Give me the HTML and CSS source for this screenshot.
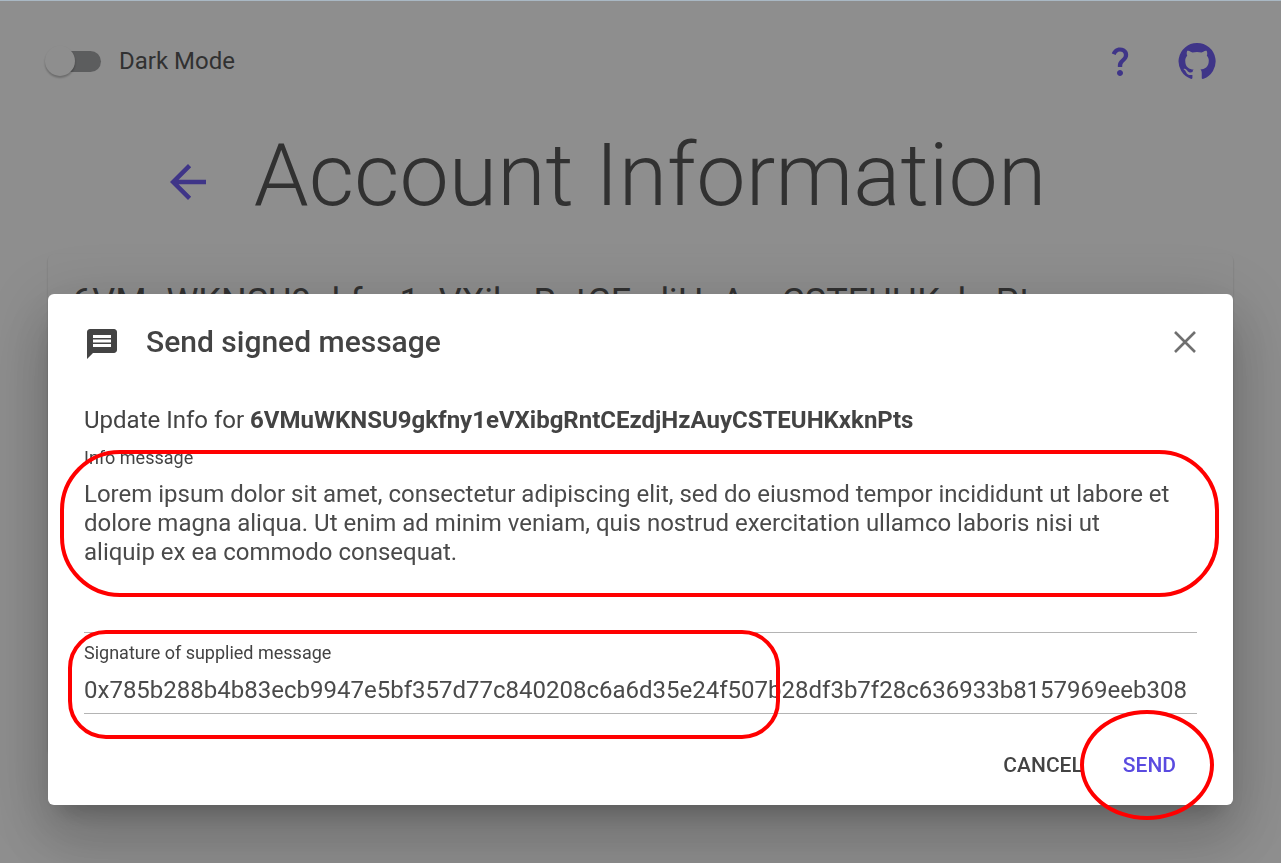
FILE: index.html
```html
<!DOCTYPE html>
<html lang="en">
<head>
<meta charset="utf-8">
<meta name="viewport" content="width=device-width, initial-scale=1">
<title>Account Information</title>
<link rel="stylesheet" href="styles.css">
</head>
<body class="page">
<header class="topbar">
  <label class="mode"><input class="switch" type="checkbox" role="switch"><span>Dark Mode</span></label>
  <nav class="links">
    <a class="icon-link" href="#help" aria-label="Help"><svg class="icon" viewBox="0 0 24 24"><path d="M11.07 12.85c.77-1.39 2.25-2.21 3.11-3.44.91-1.29.4-3.7-2.18-3.7-1.69 0-2.52 1.28-2.87 2.34L6.54 6.96C7.25 4.83 9.18 3 11.99 3c2.35 0 3.96 1.07 4.78 2.41.7 1.15 1.11 3.3.03 4.9-1.2 1.77-2.35 2.31-2.97 3.45-.25.46-.35.76-.35 2.24h-2.89c-.01-.78-.13-2.05.48-3.15M14 20c0 1.1-.9 2-2 2s-2-.9-2-2 .9-2 2-2 2 .9 2 2"/></svg></a>
    <a class="icon-link" href="#github" aria-label="GitHub"><svg class="icon icon-github" viewBox="0 0 24 24"><path d="M12 1.27a11 11 0 00-3.48 21.46c.55.09.73-.28.73-.55v-1.84c-3.03.64-3.67-1.46-3.67-1.46-.55-1.29-1.28-1.65-1.28-1.65-.92-.65.1-.65.1-.65 1.1 0 1.73 1.1 1.73 1.1.92 1.65 2.57 1.2 3.21.92a2 2 0 01.64-1.47c-2.47-.27-5.04-1.19-5.04-5.5 0-1.1.46-2.1 1.2-2.84a3.76 3.76 0 010-2.93s.91-.28 3.11 1.1c1.8-.49 3.7-.49 5.5 0 2.1-1.38 3.02-1.1 3.02-1.1a3.76 3.76 0 01.1 2.93c.83.74 1.2 1.74 1.2 2.94 0 4.21-2.57 5.13-5.04 5.4.45.37.82.92.82 2.02v3.03c0 .27.1.64.73.55A11 11 0 0012 1.27"/></svg></a>
  </nav>
</header>
<main class="account">
  <div class="heading">
    <a class="icon-link" href="#back" aria-label="Back"><svg class="icon icon-back" viewBox="0 0 24 24"><path d="M20 11H7.83l5.59-5.59L12 4l-8 8 8 8 1.41-1.41L7.83 13H20v-2z"/></svg></a>
    <h1 class="title">Account Information</h1>
  </div>
  <section class="card">
    <h2 class="address">6VMuWKNSU9gkfny1eVXibgRntCEzdjHzAuyCSTEUHKxknPts</h2>
  </section>
</main>
<div class="backdrop">
  <form class="dialog" role="dialog" aria-labelledby="dialog-title">
    <div class="dialog-head">
      <svg class="icon icon-message" viewBox="0 0 24 24"><path d="M20 2H4c-1.100 0-1.990.9-1.990 2L2 22l4-4h14c1.100 0 2-.9 2-2V4c0-1.100-.9-2-2-2zm-2 12H6v-2h12v2zm0-3H6V9h12v2zm0-3H6V6h12v2z"/></svg>
      <h2 class="dialog-title" id="dialog-title">Send signed message</h2>
      <button class="close" type="button" aria-label="Close"><svg class="icon" viewBox="0 0 36 36"><path class="stroke" d="M8 8l20 20M28 8L8 28"/></svg></button>
    </div>
    <p class="intro">Update Info for <b>6VMuWKNSU9gkfny1eVXibgRntCEzdjHzAuyCSTEUHKxknPts</b></p>
    <div class="field">
      <label class="label" for="info">Info message</label>
      <textarea class="control control-message" id="info" spellcheck="false">Lorem ipsum dolor sit amet, consectetur adipiscing elit, sed do eiusmod tempor incididunt ut labore et
dolore magna aliqua. Ut enim ad minim veniam, quis nostrud exercitation ullamco laboris nisi ut
aliquip ex ea commodo consequat.</textarea>
      <span class="mark mark-message"></span>
    </div>
    <div class="field field-signature">
      <label class="label" for="signature">Signature of supplied message</label>
      <input class="control" id="signature" type="text" spellcheck="false" value="0x785b288b4b83ecb9947e5bf357d77c840208c6a6d35e24f507b28df3b7f28c636933b8157969eeb308">
      <span class="mark mark-signature"></span>
    </div>
    <div class="actions">
      <button class="button" type="button">CANCEL</button>
      <button class="button button-primary" type="submit">SEND<span class="mark mark-send"></span></button>
    </div>
  </form>
</div>
</body>
</html>
```
FILE: styles.css
```css
* { box-sizing: border-box; }

.page {
  margin: 0;
  min-height: 100vh;
  border-top: 1px solid #a9b8c4;
  background: #fafafa;
  color: #575757;
  font: 24px/36px Roboto, "Liberation Sans", sans-serif;
}

.icon { display: block; width: 36px; height: 36px; fill: currentColor; }
.icon-github { width: 40px; height: 40px; }
.icon-back { width: 54px; height: 54px; }
.stroke { fill: none; stroke: currentColor; stroke-width: 2.600; }
.icon-link { color: #705df0; }

.topbar {
  display: flex;
  align-items: center;
  justify-content: space-between;
  height: 120px;
  padding: 0 64px 0 45px;
}
.mode { display: flex; align-items: center; gap: 18px; }
.switch {
  appearance: none;
  position: relative;
  width: 56px;
  height: 30px;
  margin: 0;
}
.switch::before {
  content: "";
  position: absolute;
  inset: 5px 0 4px 5px;
  border-radius: 11px;
  background: #a3a4a6;
}
.switch::after {
  content: "";
  position: absolute;
  inset: 0 auto auto 0;
  width: 30px;
  height: 30px;
  border-radius: 50%;
  background: #fafafa;
  box-shadow: 0 2px 2px rgba(0, 0, 0, .2), 0 1px 3px rgba(0, 0, 0, .08);
}
.links { display: flex; align-items: center; gap: 39px; }

.heading {
  display: flex;
  align-items: center;
  justify-content: center;
  gap: 39px;
  padding-right: 74px;
}
.heading .icon-link { padding-top: 14px; }
.title { margin: 0; font-size: 88px; line-height: 108px; font-weight: 300; }

.card {
  min-height: 500px;
  margin: 25px 48px 0;
  padding: 24px;
  border-radius: 6px;
  background: #fafafa;
  box-shadow: 0 2px 2px rgba(0, 0, 0, .16), 0 1px 3px rgba(0, 0, 0, .06);
}
.address { margin: 0; font-size: 36px; line-height: 48px; font-weight: 400; }

.backdrop {
  position: fixed;
  inset: 1px 0 0;
  padding: 293px 48px 48px;
  background: rgba(0, 0, 0, .43);
}
.dialog {
  padding: 24px 36px 16px;
  border-radius: 6px;
  background: #fff;
  color: #434343;
  box-shadow: 0 16px 22px -10px rgba(0, 0, 0, .2), 0 36px 57px 4px rgba(0, 0, 0, .14), 0 13px 69px 12px rgba(0, 0, 0, .12);
}
.dialog-head { display: flex; align-items: center; gap: 26px; height: 48px; }
.icon-message { margin-top: 4px; }
.dialog-title { flex: 1; margin: 0; font-size: 30px; line-height: 48px; font-weight: 500; }
.close { margin: 0 -6px 0 0; padding: 0; border: 0; background: none; color: #707070; }
.intro { margin: 36px 0 10px; }

.field { position: relative; display: flex; flex-direction: column; }
.label { font-size: 18px; line-height: 20px; }
.control {
  width: 100%;
  height: 46px;
  padding: 0 0 2px;
  border: 0;
  border-bottom: 1px solid #b4b4b4;
  border-radius: 0;
  outline: 0;
  background: none;
  color: #4a4a4a;
  font: inherit;
}
.control-message {
  height: 165px;
  padding-top: 12px;
  line-height: 29px;
  resize: none;
  overflow: hidden;
}
.field-signature { margin-top: 10px; }
.field-signature .control { margin-top: 5px; }

.actions { display: flex; justify-content: flex-end; gap: 16px; margin-top: 27px; padding-right: 9px; }
.button {
  position: relative;
  padding: 6px 12px;
  border: 0;
  background: none;
  color: #434343;
  font: 500 21px/36px Roboto, "Liberation Sans", sans-serif;
}
.button-primary { color: #5a4be0; }

.mark { position: absolute; border: 4px solid #f00; pointer-events: none; }
.mark-message { inset: 2px -22px 36px -24px; border-radius: 60px; }
.mark-signature { top: -13px; bottom: -25px; left: -16px; width: 712px; border-radius: 38px; }
.mark-send { inset: -31px -26px -31px -31px; border-radius: 50%; }
```
